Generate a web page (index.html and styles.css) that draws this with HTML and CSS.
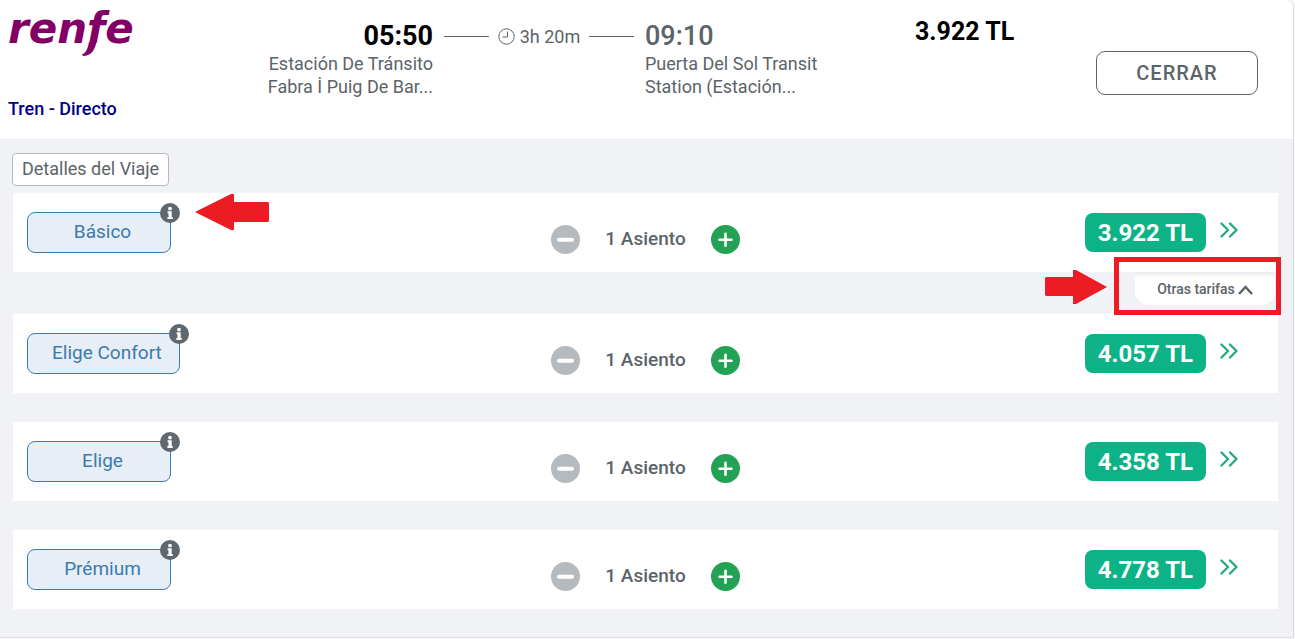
FILE: index.html
```html
<!DOCTYPE html>
<html lang="es">
<head>
    <meta charset="UTF-8">
    <meta name="viewport" content="width=device-width, initial-scale=1">
    <title>Renfe</title>
    <link rel="stylesheet" href="styles.css">
</head>
<body>
<!-- shared icons -->
<svg class="sprite" aria-hidden="true">
    <symbol id="i-info" viewBox="0 0 20 20">
        <circle cx="10" cy="10" r="10" fill="#5f686e"/>
        <circle cx="10" cy="5.6" r="1.9" fill="#fff"/>
        <path d="M7.6 8.3h4.1v5.6h1v2H7.4v-2h1.1v-3.6h-.9z" fill="#fff"/>
    </symbol>
    <symbol id="i-minus" viewBox="0 0 29 29">
        <circle cx="14.5" cy="14.5" r="14.5" fill="#b4babe"/>
        <path d="M8 14.8h13" stroke="#fff" stroke-width="4" stroke-linecap="round"/>
    </symbol>
    <symbol id="i-plus" viewBox="0 0 29 29">
        <circle cx="14.5" cy="14.5" r="14.5" fill="#23a155"/>
        <path d="M8.5 14.8h12M14.5 8.8v12" stroke="#fff" stroke-width="2.6" stroke-linecap="round"/>
    </symbol>
    <symbol id="i-next" viewBox="0 0 18 16">
        <path d="M1.5 1.5L8 8l-6.5 6.5M10 1.5L16.5 8 10 14.5" fill="none" stroke="#29ab7f" stroke-width="2.4" stroke-linecap="round" stroke-linejoin="round"/>
    </symbol>
</svg>

<main class="card">
    <header class="trip">
        <div class="company">
            <svg class="logo" width="140" height="52" viewBox="0 0 140 52" role="img" aria-label="renfe">
                <text x="0" y="35">renfe</text>
                <!-- tail under the wordmark -->
                <path d="M81 34h7.5c-2 9-6 14-13.500 14l-1-1.5c4-1.5 5.500-5 7-12.500z"/>
            </svg>
            <p class="kind">Tren - Directo</p>
        </div>
        <div class="stop from">
            <b class="time">05:50</b>
            <p>Estación De Tránsito<br>Fabra İ Puig De Bar...</p>
        </div>
        <div class="duration">
            <span class="line"></span>
            <svg width="17" height="17" viewBox="0 0 17 17" fill="none" stroke="#5b6469">
                <circle cx="8.5" cy="8.5" r="7.7"/>
                <path d="M9.5 3.5v5.5H4.5"/>
            </svg>
            <span>3h 20m</span>
            <span class="line"></span>
        </div>
        <div class="stop to">
            <span class="time">09:10</span>
            <p>Puerta Del Sol Transit<br>Station (Estación...</p>
        </div>
        <b class="total">3.922 TL</b>
        <button class="close" type="button">CERRAR</button>
    </header>

    <section class="fares">
        <button class="details" type="button">Detalles del Viaje</button>

        <div class="fare">
            <div class="name">
                <button class="class-btn" type="button">Básico</button>
                <svg class="info"><use href="#i-info"/></svg>
                <svg class="arrow arrow-left" viewBox="0 0 74 36"><path d="M0 18L36 0h3v8h34l1 1v18l-1 1H39v8h-3z"/></svg>
            </div>
            <div class="seats">
                <button type="button" aria-label="Menos"><svg><use href="#i-minus"/></svg></button>
                <span>1 Asiento</span>
                <button type="button" aria-label="Más"><svg><use href="#i-plus"/></svg></button>
            </div>
            <div class="buy">
                <button class="price" type="button">3.922 TL</button>
                <svg class="next"><use href="#i-next"/></svg>
            </div>
        </div>

        <div class="others">
            <button class="others-btn" type="button">Otras tarifas
                <svg width="15" height="10" viewBox="0 0 15 10"><path d="M1 9l6.5-7L14 9" fill="none" stroke="#5b6469" stroke-width="2.5"/></svg>
            </button>
            <span class="frame"></span>
            <svg class="arrow arrow-right" viewBox="0 0 62 34"><path d="M62 17L31 34h-3v-8H1l-1-1V8l1-1h27V0h3z"/></svg>
        </div>

        <div class="fare">
            <div class="name">
                <button class="class-btn" type="button">Elige Confort</button>
                <svg class="info"><use href="#i-info"/></svg>
            </div>
            <div class="seats">
                <button type="button" aria-label="Menos"><svg><use href="#i-minus"/></svg></button>
                <span>1 Asiento</span>
                <button type="button" aria-label="Más"><svg><use href="#i-plus"/></svg></button>
            </div>
            <div class="buy">
                <button class="price" type="button">4.057 TL</button>
                <svg class="next"><use href="#i-next"/></svg>
            </div>
        </div>

        <div class="fare">
            <div class="name">
                <button class="class-btn" type="button">Elige</button>
                <svg class="info"><use href="#i-info"/></svg>
            </div>
            <div class="seats">
                <button type="button" aria-label="Menos"><svg><use href="#i-minus"/></svg></button>
                <span>1 Asiento</span>
                <button type="button" aria-label="Más"><svg><use href="#i-plus"/></svg></button>
            </div>
            <div class="buy">
                <button class="price" type="button">4.358 TL</button>
                <svg class="next"><use href="#i-next"/></svg>
            </div>
        </div>

        <div class="fare">
            <div class="name">
                <button class="class-btn" type="button">Prémium</button>
                <svg class="info"><use href="#i-info"/></svg>
            </div>
            <div class="seats">
                <button type="button" aria-label="Menos"><svg><use href="#i-minus"/></svg></button>
                <span>1 Asiento</span>
                <button type="button" aria-label="Más"><svg><use href="#i-plus"/></svg></button>
            </div>
            <div class="buy">
                <button class="price" type="button">4.778 TL</button>
                <svg class="next"><use href="#i-next"/></svg>
            </div>
        </div>
    </section>
</main>
</body>
</html>
```
FILE: styles.css
```css
* {
    box-sizing: border-box;
    margin: 0;
    padding: 0;
}

body {
    background: #f8f8f9;
    color: #5b6469;
    font: 18px/23px Roboto, "Liberation Sans", sans-serif;
}

button {
    font: inherit;
    color: inherit;
    background: none;
    border: 0;
    cursor: pointer;
}

svg {
    display: block;
    flex: none;
}

.sprite {
    position: absolute;
    width: 0;
    height: 0;
}

.card {
    margin-right: 1px;
    background: #f1f2f6;
    border-right: 1px solid #d9dadd;
    border-bottom: 1px solid #dfe0e2;
    border-radius: 0 8px 0 0;
    overflow: hidden;
}

/* header */
.trip {
    display: grid;
    grid-template-columns: 252fr 173fr 212fr 270fr 181fr 162px;
    align-items: start;
    padding: 8px 35px 19px 8px;
    background: #fff;
    border-bottom: 1px solid #ebecef;
}

.logo {
    overflow: visible;
    fill: #820066;
    font: italic bold 42px "DejaVu Sans", sans-serif;
}

.kind {
    margin-top: 37px;
    color: #00008b;
    font-weight: 500;
}

.stop {
    padding-top: 13px;
}

.time {
    display: block;
    font-size: 27px;
    line-height: 31px;
    font-weight: 500;
}

.from {
    text-align: right;
}

.from .time,
.total {
    color: #000;
    font-weight: 700;
}

.duration {
    display: flex;
    align-items: center;
    justify-content: center;
    gap: 5px;
    padding-top: 17px;
}

.line {
    width: 45px;
    height: 1px;
    margin: 0 4px;
    background: #5b6469;
}

.total {
    padding-top: 8px;
    font-size: 25px;
    line-height: 31px;
}

.close {
    height: 44px;
    margin-top: 43px;
    border: 1px solid #5b6469;
    border-radius: 9px;
    font-size: 20px;
    font-weight: 500;
    letter-spacing: 1px;
}

/* fares */
.fares {
    display: flex;
    flex-direction: column;
    padding: 13px 15px 28px 13px;
}

.details {
    align-self: flex-start;
    height: 33px;
    margin: 0 0 7px -1px;
    padding: 0 9px 2px;
    background: #fff;
    border: 1px solid #b4babe;
    border-radius: 4px;
}

.fare {
    display: grid;
    grid-template-columns: 1fr auto 1fr;
    align-items: start;
    height: 79px;
    padding: 19px 40px 0 14px;
    background: #fff;
}

.fare + .fare {
    margin-top: 29px;
}

.name {
    position: relative;
    justify-self: start;
}

.class-btn {
    min-width: 144px;
    height: 41px;
    padding: 0 17px 2px 24px;
    background: #e7eef5;
    border: 1px solid #3b7bad;
    border-radius: 8px;
    color: #3b7bad;
    font-size: 19px;
}

.info {
    position: absolute;
    top: -9px;
    right: -9px;
    width: 20px;
    height: 20px;
}

.seats {
    display: flex;
    align-items: center;
    gap: 25px;
    margin-left: 26px;
    padding-top: 13px;
    font-size: 19px;
    font-weight: 500;
}

.seats span {
    padding-bottom: 2px;
}

.seats button,
.seats svg {
    width: 29px;
    height: 29px;
}

.buy {
    display: flex;
    justify-self: end;
    gap: 14px;
}

.price {
    height: 39px;
    margin-top: 1px;
    padding: 1px 13px 0;
    background: #0db287;
    border-radius: 8px;
    color: #fff;
    font-size: 24px;
    font-weight: 700;
}

.next {
    width: 18px;
    height: 16px;
    margin-top: 10px;
}

.others {
    position: relative;
    display: flex;
    justify-content: flex-end;
    padding: 0 3px 9px 0;
}

.others-btn {
    display: flex;
    align-items: center;
    justify-content: center;
    gap: 3px;
    width: 140px;
    height: 33px;
    padding-top: 2px;
    background: linear-gradient(#ebebeb, #fff 6px);
    border-radius: 0 0 14px 14px;
    font-size: 14px;
    font-weight: 500;
}

/* red marks over the page */
.frame {
    position: absolute;
    top: -15px;
    right: -3px;
    width: 167px;
    height: 58px;
    border: 5px solid #ed1c24;
}

.arrow {
    position: absolute;
    fill: #ed1c24;
}

.arrow-left {
    top: -18px;
    left: 168px;
    width: 74px;
    height: 36px;
}

.arrow-right {
    top: -2px;
    right: 171px;
    width: 62px;
    height: 34px;
}
```
